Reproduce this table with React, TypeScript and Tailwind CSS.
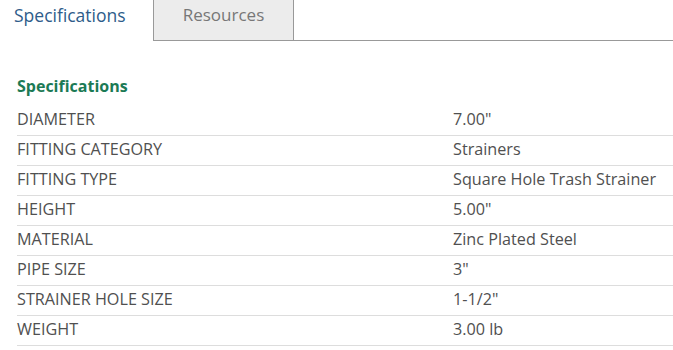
import React from 'react';

const specs = [
  { label: 'DIAMETER', value: '7.00"' },
  { label: 'FITTING CATEGORY', value: 'Strainers' },
  { label: 'FITTING TYPE', value: 'Square Hole Trash Strainer' },
  { label: 'HEIGHT', value: '5.00"' },
  { label: 'MATERIAL', value: 'Zinc Plated Steel' },
  { label: 'PIPE SIZE', value: '3"' },
  { label: 'STRAINER HOLE SIZE', value: '1-1/2"' },
  { label: 'WEIGHT', value: '3.00 lb' },
];

const App: React.FC = () => {
  return (
    <div className="w-[673px] h-[350px] overflow-hidden bg-white font-['Open_Sans',sans-serif]">
      {/* Tabs */}
      <div className="flex h-[41px]">
        <div className="w-[153px] pl-[14px] pt-[2px] text-[17.5px] text-[#2e5c8a]">Specifications</div>
        <div className="w-[141px] h-[41px] border border-t-0 border-[#999] bg-[#ececec] pt-[2px] text-center text-[17px] text-[#777]">
          Resources
        </div>
        <div className="flex-1 border-b border-[#999]" />
      </div>

      {/* Specs table */}
      <div className="pl-[17px] pt-[33px]">
        <h2 className="text-[16px] font-bold leading-[24px] text-[#1b7a55]">Specifications</h2>
        <div className="mt-[8px]">
          {specs.map((row) => (
            <div key={row.label} className="flex h-[30px] items-center pb-[2px] border-b border-[#ddd] text-[16.2px] text-[#505050]">
              <div className="w-[436px]">{row.label}</div>
              <div className="flex-1">{row.value}</div>
            </div>
          ))}
        </div>
      </div>
    </div>
  );
};

export default App;
